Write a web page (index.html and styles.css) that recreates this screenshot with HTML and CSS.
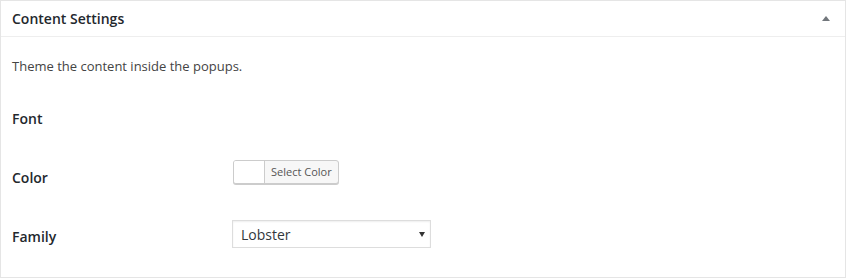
FILE: index.html
```html
<!DOCTYPE html>
<html lang="en">

<head>
    <meta charset="UTF-8" />
    <title>Content Settings</title>
    <link rel="stylesheet" href="styles.css">
</head>

<body>
    <div class="postbox">
        <div class="postbox-header">
            <h2 class="postbox-title">Content Settings</h2>
            <span class="toggle-arrow"></span>
        </div>
        <div class="inside">
            <p class="desc">Theme the content inside the popups.</p>
            <div class="field-row">
                <label class="field-label">Font</label>
                <div class="field-control"></div>
            </div>
            <div class="field-row">
                <label class="field-label">Color</label>
                <div class="field-control color-control">
                    <button type="button" class="color-btn">
                        <span class="color-swatch"></span>
                        <span class="color-text">Select Color</span>
                    </button>
                </div>
            </div>
            <div class="field-row">
                <label class="field-label" for="family">Family</label>
                <div class="field-control select-control">
                    <div class="select-wrap">
                        <select id="family" class="family-select">
                            <option>Lobster</option>
                            <option>Open Sans</option>
                            <option>Roboto</option>
                        </select>
                    </div>
                </div>
            </div>
        </div>
    </div>
</body>

</html>
```

FILE: styles.css
```css
body {
    margin: 0;
    font-family: "Open Sans", "Liberation Sans", sans-serif;
    background: #fff;
}

.postbox {
    width: 846px;
    box-sizing: border-box;
    border: 1px solid #e5e5e5;
    background: #fff;
}

.postbox-header {
    height: 35px;
    display: flex;
    align-items: center;
    justify-content: space-between;
    padding: 0 15px 0 11px;
    border-bottom: 1px solid #eee;
}

.postbox-title {
    margin: 0;
    font-size: 14px;
    font-weight: 600;
    line-height: 1.4;
    color: #23282d;
}

.toggle-arrow {
    width: 0;
    height: 0;
    border-left: 4px solid transparent;
    border-right: 4px solid transparent;
    border-bottom: 5px solid #72777c;
}

.inside {
    padding: 0 11px 10px;
}

.desc {
    margin: 20px 0 14px;
    font-size: 13px;
    line-height: 19px;
    color: #444;
}

.field-row {
    height: 59px;
    display: grid;
    grid-template-columns: 221px 1fr;
}

.field-label {
    padding-top: 20px;
    font-size: 14px;
    font-weight: 600;
    line-height: 18.2px;
    color: #23282d;
}

.color-control {
    padding-top: 11px;
}

.select-control {
    padding-top: 12px;
    margin-left: -1px;
}

.color-btn {
    display: flex;
    height: 24px;
    padding: 0;
    margin: 0;
    border: 1px solid #ccc;
    border-radius: 3px;
    background: #f7f7f7;
    box-shadow: 0 1px 0 #ccc;
    box-sizing: border-box;
    font-family: inherit;
    cursor: pointer;
}

.color-swatch {
    width: 30px;
    height: 100%;
    background: #fff;
    border-right: 1px solid #ccc;
    border-radius: 2px 0 0 2px;
}

.color-text {
    padding: 0 6px;
    font-size: 11px;
    line-height: 22px;
    color: #555;
}

.select-wrap {
    position: relative;
    width: 199px;
}

.select-wrap::after {
    content: "";
    position: absolute;
    right: 6px;
    top: 12px;
    border-left: 3px solid transparent;
    border-right: 3px solid transparent;
    border-top: 5px solid #333;
    pointer-events: none;
}

.family-select {
    appearance: none;
    -webkit-appearance: none;
    width: 100%;
    height: 28px;
    margin: 0;
    padding: 0 20px 0 8px;
    border: 1px solid #ddd;
    border-radius: 0;
    background: #fff;
    box-shadow: inset 0 1px 2px rgba(0, 0, 0, 0.07);
    font-family: inherit;
    font-size: 14px;
    color: #32373c;
    outline: none;
}
```
